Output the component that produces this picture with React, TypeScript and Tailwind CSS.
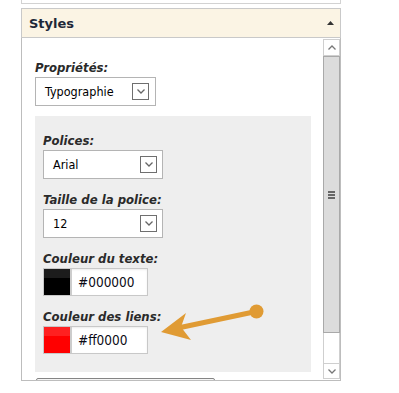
const Chevron = ({ up = false, color = "#555" }: { up?: boolean; color?: string }) => (
  <svg width="8" height="5" viewBox="0 0 8 5">
    <polyline
      points={up ? "0.5,4.5 4,1 7.5,4.5" : "0.5,0.5 4,4 7.5,0.5"}
      fill="none"
      stroke={color}
      strokeWidth="1.3"
    />
  </svg>
);

const Label = ({ text }: { text: string }) => (
  <div className="h-[16px] text-[13px] font-bold italic leading-[16px] text-[#2a2a2a] whitespace-nowrap">
    {text}
  </div>
);

const Select = ({ value, w, pr }: { value: string; w: string; pr: string }) => (
  <div
    className={`mt-[1px] h-[29px] ${w} ${pr} flex items-center justify-between border border-[#b4b4b4] bg-white pl-[9px]`}
  >
    <span className="text-[12.5px] leading-[14px] text-black">{value}</span>
    <div className="flex h-[17px] w-[17px] items-center justify-center border border-[#6f6f6f] bg-white">
      <Chevron color="#666" />
    </div>
  </div>
);

const ColorInput = ({ value, top, bottom }: { value: string; top: string; bottom: string }) => (
  <div className="mt-[1px] flex h-[28px] w-[105px] border border-[#c8c8c8] bg-white shadow-[inset_0_1px_2px_rgba(0,0,0,0.08)]">
    <div className="flex w-[26px] flex-col">
      <div className={`h-[9px] ${top}`} />
      <div className={`flex-1 ${bottom}`} />
    </div>
    <div className="w-[2px] bg-[#cccccc]" />
    <span className="pl-[6px] text-[13.5px] leading-[26px] text-[#0a0a14]">{value}</span>
  </div>
);

const App = () => {
  return (
    <div className="relative h-[393px] w-[399px] overflow-hidden bg-white font-['DejaVu_Sans_Condensed','DejaVu_Sans',sans-serif]">
      <div className="ml-[21px] w-[320px]">
        <div className="h-[4px] border-x border-b border-[#d2d2d2]" />
        <div className="mt-[4px] flex h-[30px] justify-between border border-[#c9c9c9] bg-[#fbf4e4] pl-[7px] pr-[6px] pt-[7px]">
          <span className="font-['DejaVu_Sans',sans-serif] text-[13px] font-bold leading-[16px] text-[#1e2838]">
            Styles
          </span>
          <svg width="7" height="4" viewBox="0 0 7 4" className="mt-[5px]">
            <polygon points="0,4 3.5,0 7,4" fill="#333" />
          </svg>
        </div>
        <div className="flex h-[343px] border-x border-b border-[#bdbdbd]">
          <div className="flex-1 overflow-hidden pl-[13px] pt-[22px]">
            <Label text="Propriétés:" />
            <Select value="Typographie" w="w-[121px]" pr="pr-[6px]" />
            <div className="mt-[10px] w-[276px] bg-[#eeeeee] pb-[18px] pl-[8px] pt-[17px]">
              <Label text="Polices:" />
              <Select value="Arial" w="w-[120px]" pr="pr-[5px]" />
              <div className="mt-[13px]">
                <Label text="Taille de la police:" />
                <Select value="12" w="w-[120px]" pr="pr-[5px]" />
              </div>
              <div className="mt-[13px]">
                <Label text="Couleur du texte:" />
                <ColorInput value="#000000" top="bg-[#1c1c1c]" bottom="bg-black" />
              </div>
              <div className="mt-[13px]">
                <Label text="Couleur des liens:" />
                <ColorInput value="#ff0000" top="bg-[#ff2020]" bottom="bg-[#ff0000]" />
              </div>
            </div>
            <div className="ml-[1px] mt-[6px] h-[24px] w-[179px] rounded-[2px] border border-[#858585] bg-[#f5f5f5]" />
          </div>
          <div className="flex w-[17px] flex-col py-[1px]">
            <div className="flex h-[17px] items-center justify-center border border-[#cfcfcf] bg-white">
              <Chevron up color="#777" />
            </div>
            <div className="flex h-[277px] flex-col items-center justify-center gap-[1px] border border-[#a9a9a9] bg-[#dcdcdc]">
              <div className="h-[2px] w-[7px] bg-[#666]" />
              <div className="h-[2px] w-[7px] bg-[#666]" />
              <div className="h-[2px] w-[7px] bg-[#666]" />
            </div>
            <div className="h-[30px] border-x border-[#cfcfcf] bg-white" />
            <div className="flex h-[16px] items-center justify-center border border-[#cfcfcf] bg-white">
              <Chevron color="#777" />
            </div>
          </div>
        </div>
      </div>
      <svg className="pointer-events-none absolute left-0 top-0" width="399" height="393" viewBox="0 0 399 393">
        <line x1="178" y1="328" x2="256" y2="311.5" stroke="#e09b34" strokeWidth="5" />
        <polygon points="161,332 186,313 181,327 191,340" fill="#e09b34" />
        <circle cx="256.5" cy="311.5" r="7" fill="#e09b34" />
      </svg>
    </div>
  );
};

export default App;
